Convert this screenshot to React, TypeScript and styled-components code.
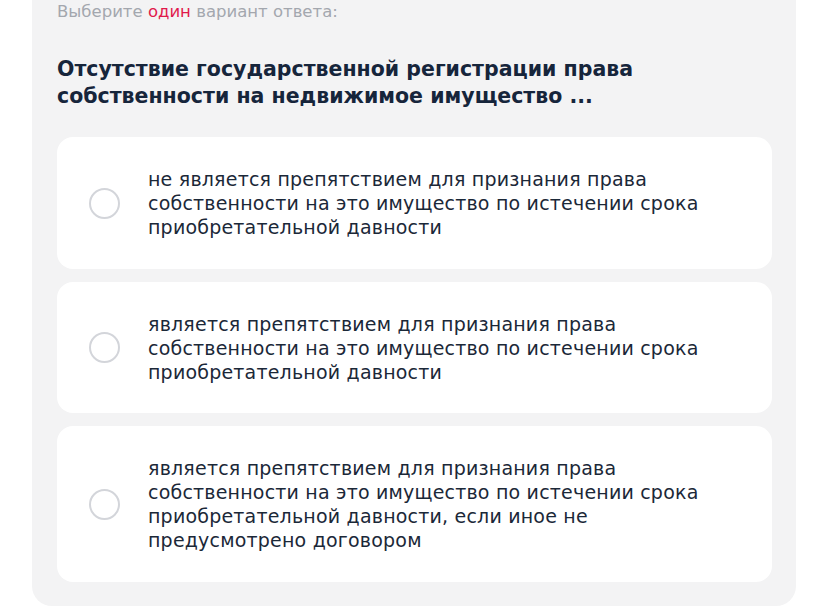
import React, { useState } from 'react';
import styled, { createGlobalStyle } from 'styled-components';

const GlobalStyle = createGlobalStyle`
  body {
    margin: 0;
    background: #ffffff;
    font-family: "DejaVu Sans", "Noto Sans", sans-serif;
  }
`;

const Panel = styled.div`
  margin: -24px 32px 0;
  padding: 26px 24px 24px 25px;
  background: #f3f3f4;
  border-radius: 20px;
`;

const Hint = styled.div`
  font-size: 16.5px;
  line-height: 20px;
  color: #a3a7ae;

  span {
    color: #e1194b;
  }
`;

const Question = styled.h2`
  margin: 34px 0 27px;
  font-size: 20.5px;
  line-height: 27px;
  font-weight: 700;
  color: #16253b;
  max-width: 640px;
`;

const Options = styled.div`
  display: flex;
  flex-direction: column;
  gap: 13px;
`;

const Option = styled.label`
  display: flex;
  align-items: center;
  gap: 28px;
  padding: 30px 32px 29.5px;
  background: #ffffff;
  border-radius: 16px;
  cursor: pointer;
`;

const Radio = styled.span<{ $checked: boolean }>`
  flex: none;
  width: 31px;
  height: 31px;
  box-sizing: border-box;
  border-radius: 50%;
  border: 2px solid ${p => (p.$checked ? '#e1194b' : '#d3d5da')};
  background: #ffffff;
  box-shadow: ${p => (p.$checked ? 'inset 0 0 0 5px #fff, inset 0 0 0 20px #e1194b' : 'none')};
`;

const OptionText = styled.span`
  font-size: 19px;
  line-height: 24px;
  letter-spacing: 0.2px;
  color: #1b2838;
  max-width: 575px;
`;

const answers = [
  'не является препятствием для признания права собственности на это имущество по истечении срока приобретательной давности',
  'является препятствием для признания права собственности на это имущество по истечении срока приобретательной давности',
  'является препятствием для признания права собственности на это имущество по истечении срока приобретательной давности, если иное не предусмотрено договором',
];

function App() {
  const [selected, setSelected] = useState<number | null>(null);

  return (
    <>
      <GlobalStyle />
      <Panel>
        <Hint>
          Выберите <span>один</span> вариант ответа:
        </Hint>
        <Question>
          Отсутствие государственной регистрации права собственности на недвижимое имущество ...
        </Question>
        <Options>
          {answers.map((text, i) => (
            <Option key={i} onClick={() => setSelected(i)}>
              <Radio $checked={selected === i} />
              <OptionText>{text}</OptionText>
            </Option>
          ))}
        </Options>
      </Panel>
    </>
  );
}

export default App;
